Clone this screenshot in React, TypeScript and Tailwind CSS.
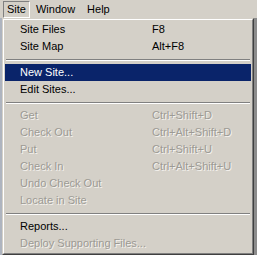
export default function App() {
  const items: any[] = [
    { label: "Site Files", key: "F8" },
    { label: "Site Map", key: "Alt+F8" },
    { sep: true },
    { label: "New Site...", active: true },
    { label: "Edit Sites..." },
    { sep: true },
    { label: "Get", key: "Ctrl+Shift+D", off: true },
    { label: "Check Out", key: "Ctrl+Alt+Shift+D", off: true },
    { label: "Put", key: "Ctrl+Shift+U", off: true },
    { label: "Check In", key: "Ctrl+Alt+Shift+U", off: true },
    { label: "Undo Check Out", off: true },
    { label: "Locate in Site", off: true },
    { sep: true },
    { label: "Reports..." },
    { label: "Deploy Supporting Files...", off: true },
  ];

  return (
    <div
      className="w-[257px] h-[255px] bg-[#d4d0c8] flex flex-col overflow-hidden text-[11px] text-black"
      style={{ fontFamily: '"Liberation Sans", Arial, sans-serif' }}
    >
      <div className="h-[18px] flex items-stretch pl-[3px] pt-[1px]">
        <span className="px-[3px] flex items-center border border-t-[#808080] border-l-[#808080] border-b-white border-r-white">
          Site
        </span>
        <span className="px-[6px] flex items-center">Window</span>
        <span className="px-[6px] flex items-center">Help</span>
      </div>
      <div className="flex flex-1">
        <div className="w-[2px] bg-[#aeb4bf]"></div>
        <div className="flex-1 border border-t-[#d4d0c8] border-l-[#d4d0c8] border-r-[#404040] border-b-[#404040]">
          <div className="h-full border border-t-white border-l-white border-r-[#808080] border-b-[#808080] p-[1px]">
            {items.map((it, i) =>
              it.sep ? (
                <div key={i} className="h-[9px] flex flex-col justify-center px-[1px]">
                  <div className="h-[1px] bg-[#808080]"></div>
                  <div className="h-[1px] bg-white"></div>
                </div>
              ) : (
                <div
                  key={i}
                  className={`h-[17px] flex items-center ${it.active ? "bg-[#0a246a] text-white" : ""} ${it.off ? "text-[#9c9a94]" : ""}`}
                  style={it.off ? { textShadow: "1px 1px 0 #f4f2ee" } : undefined}
                >
                  <span className="w-[147px] pl-[15px] whitespace-nowrap">{it.label}</span>
                  <span className="whitespace-nowrap">{it.key}</span>
                </div>
              )
            )}
          </div>
        </div>
        <div className="w-[3px] bg-[#8c8c8c]"></div>
      </div>
    </div>
  );
}
